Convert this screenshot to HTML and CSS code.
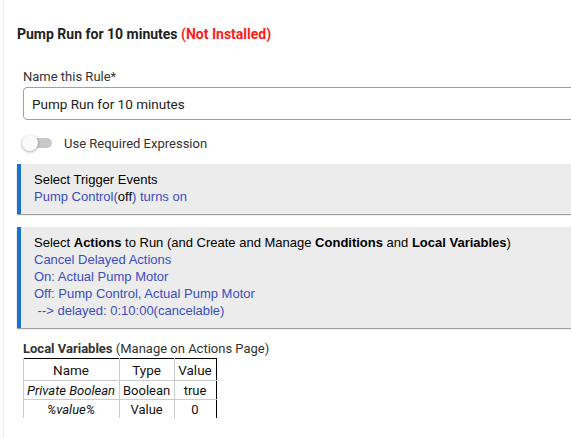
FILE: index.html
```html
<!DOCTYPE html>
<html lang="en">

<head>
  <meta charset="UTF-8">
  <meta name="viewport" content="width=device-width, initial-scale=1.0">
  <title>Pump Run for 10 minutes</title>
  <link rel="stylesheet" href="styles.css">
</head>

<body>
  <div class="page">
    <h2 class="rule-title">Pump Run for 10 minutes <span class="not-installed">(Not Installed)</span></h2>

    <div class="field">
      <label for="ruleName">Name this Rule*</label>
      <input type="text" id="ruleName" value="Pump Run for 10 minutes">
    </div>

    <div class="toggle-row">
      <span class="toggle"><span class="knob"></span></span>
      <span class="toggle-label">Use Required Expression</span>
    </div>

    <div class="section">
      <div class="section-title">Select Trigger Events</div>
      <div class="link">Pump Control(<span class="state">off</span>) turns on</div>
    </div>

    <div class="section">
      <div class="section-title">Select <b>Actions</b> to Run (and Create and Manage <b>Conditions</b> and <b>Local Variables</b>)</div>
      <div class="link">Cancel Delayed Actions</div>
      <div class="link">On: Actual Pump Motor</div>
      <div class="link">Off: Pump Control, Actual Pump Motor</div>
      <div class="link">&nbsp;--&gt; delayed: 0:10:00(cancelable)</div>
    </div>

    <div class="vars">
      <div class="vars-title"><b>Local Variables</b> (Manage on Actions Page)</div>
      <table class="vars-table">
        <tr>
          <th>Name</th>
          <th>Type</th>
          <th>Value</th>
        </tr>
        <tr>
          <td><i>Private Boolean</i></td>
          <td>Boolean</td>
          <td>true</td>
        </tr>
        <tr>
          <td><i>%value%</i></td>
          <td>Value</td>
          <td>0</td>
        </tr>
      </table>
    </div>
  </div>
</body>

</html>
```

FILE: styles.css
```css
html,
body {
  margin: 0;
  padding: 0;
  background-color: #fff;
  overflow: hidden;
}

body {
  font-family: Roboto, "Liberation Sans", Arial, sans-serif;
  color: #222;
}

.page {
  width: 700px;
  margin-left: 3px;
  border-left: 1px solid #eee;
  padding: 25px 0 20px 13px;
  box-sizing: border-box;
}

.rule-title {
  font-size: 14px;
  font-weight: 700;
  margin: 0 0 26px 0;
  line-height: 18px;
  color: #222;
}

.not-installed {
  color: #ff1a1a;
}

.field {
  margin-left: 6px;
}

.field label {
  display: block;
  font-size: 13px;
  line-height: 16px;
  color: #333;
  margin-bottom: 2px;
}

.field input {
  width: 100%;
  height: 33px;
  box-sizing: border-box;
  border: 1px solid #a0a0a0;
  border-radius: 4px;
  padding: 0 8px;
  font-family: Roboto, "Liberation Sans", Arial, sans-serif;
  font-size: 13.5px;
  color: #222;
}

.toggle-row {
  display: flex;
  align-items: center;
  margin: 15px 0 0 5px;
  height: 16px;
}

.toggle {
  position: relative;
  width: 30px;
  height: 10px;
  border-radius: 5px;
  background-color: #c8c8c8;
  margin-right: 12px;
}

.toggle .knob {
  position: absolute;
  left: 0;
  top: -3px;
  width: 16px;
  height: 16px;
  border-radius: 50%;
  background-color: #fafafa;
  box-shadow: 0 1px 3px rgba(0, 0, 0, 0.35);
}

.toggle-label {
  font-size: 13px;
  color: #333;
}

.section {
  margin-top: 13px;
  background-color: #ececec;
  border-left: 4px solid #1a73d1;
  padding: 7px 0 9px 13px;
  box-shadow: 0 1px 1px #a0a0a0;
  font-family: "Liberation Sans", Arial, sans-serif;
  font-size: 13px;
  line-height: 17px;
  color: #000;
}

.section-title b {
  font-weight: 700;
}

.link {
  color: #3b4cc0;
}

.link .state {
  color: #000;
}

.vars {
  margin: 13px 0 0 6px;
}

.vars-title {
  font-size: 13px;
  line-height: 16px;
  color: #333;
}

.vars-title b {
  font-weight: 700;
}

.vars-table {
  border-collapse: collapse;
  margin-top: 1px;
  font-size: 13px;
  color: #111;
  border: 1px solid #000;
  border-bottom: none;
}

.vars-table th,
.vars-table td {
  border-left: 1px solid #ccc;
  border-top: 1px solid #ccc;
  padding: 0 4px 0 3px;
  height: 18px;
  text-align: center;
  font-weight: 400;
}

.vars-table th {
  height: 21px;
  font-size: 13.5px;
}

.vars-table tr:first-child th {
  border-top: none;
}
```
